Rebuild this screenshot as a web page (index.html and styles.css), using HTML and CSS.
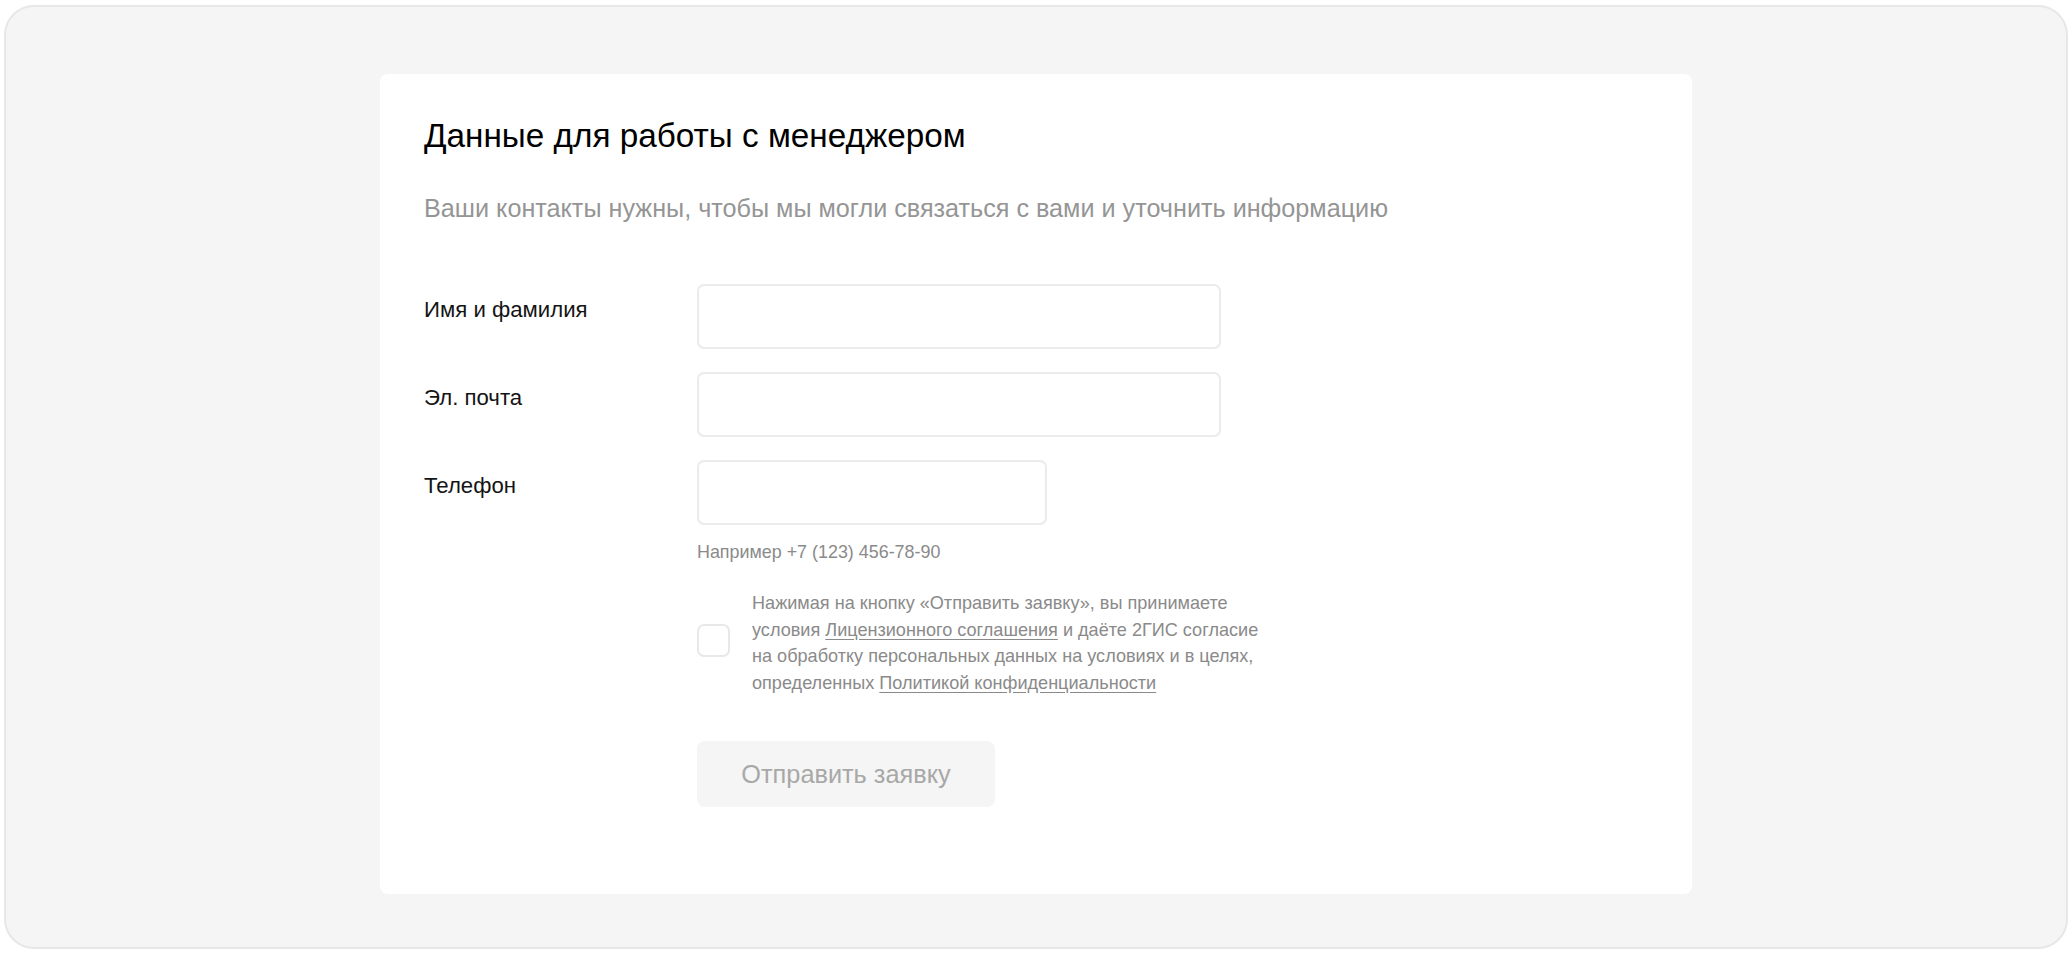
FILE: index.html
```html
<!DOCTYPE html>
<html lang="ru">
<head>
<meta charset="utf-8">
<title>Данные для работы с менеджером</title>
<link rel="stylesheet" href="styles.css">
</head>
<body>
<div class="frame">
  <div class="card">
    <h1 class="title">Данные для работы с менеджером</h1>
    <p class="subtitle">Ваши контакты нужны, чтобы мы могли связаться с вами и уточнить информацию</p>
    <form class="form">
      <div class="row">
        <label class="label" for="name">Имя и фамилия</label>
        <div class="field"><input class="input" id="name" type="text"></div>
      </div>
      <div class="row">
        <label class="label" for="email">Эл. почта</label>
        <div class="field"><input class="input" id="email" type="email"></div>
      </div>
      <div class="row">
        <label class="label" for="phone">Телефон</label>
        <div class="field">
          <input class="input input-short" id="phone" type="tel">
          <div class="hint">Например +7 (123) 456-78-90</div>
        </div>
      </div>
      <div class="row">
        <div></div>
        <div class="field">
          <div class="consent">
            <span class="checkbox"></span>
            <p class="consent-text">Нажимая на кнопку «Отправить заявку», вы принимаете<br>условия <a href="#">Лицензионного соглашения</a> и даёте 2ГИС согласие<br>на обработку персональных данных на условиях и в целях,<br>определенных <a href="#">Политикой конфиденциальности</a></p>
          </div>
          <button class="submit" type="button">Отправить заявку</button>
        </div>
      </div>
    </form>
  </div>
</div>
</body>
</html>
```

FILE: styles.css
```css
* { box-sizing: border-box; }
html, body { margin: 0; padding: 0; }
body {
  background: #ffffff;
  font-family: "Liberation Sans", Arial, Helvetica, sans-serif;
  color: #141414;
}
.frame {
  margin: 5px 4px 7px 4px;
  height: 944px;
  border: 2px solid #e7e7e7;
  border-radius: 30px;
  background: #f5f5f5;
  padding-top: 67px;
  display: flex;
  justify-content: center;
  align-items: flex-start;
}
.card {
  width: 1312px;
  background: #ffffff;
  border-radius: 8px;
  padding: 42px 44px 87px 44px;
}
.title {
  margin: 0;
  font-size: 33.3px;
  line-height: 40px;
  font-weight: 400;
  color: #000;
}
.subtitle {
  margin: 36px 0 0 0;
  font-size: 25.2px;
  line-height: 32px;
  color: #959595;
}
.form {
  margin-top: 60px;
  display: flex;
  flex-direction: column;
  gap: 23px;
}
.row {
  display: grid;
  grid-template-columns: 273px 1fr;
}
.label {
  padding-top: 12px;
  font-size: 22.2px;
  line-height: 28px;
  color: #141414;
}
.field {
  display: flex;
  flex-direction: column;
  align-items: flex-start;
}
.input {
  width: 524px;
  height: 65px;
  border: 2px solid #ebebeb;
  border-radius: 7px;
  background: #fff;
  outline: none;
  padding: 0 16px;
  font: inherit;
}
.input-short { width: 350px; }
.hint {
  margin-top: 14px;
  font-size: 17.9px;
  line-height: 26px;
  color: #8a8a8a;
}
.consent {
  margin-top: 2px;
  display: flex;
  align-items: center;
  gap: 22px;
}
.checkbox {
  flex: none;
  width: 33px;
  height: 33px;
  border: 2px solid #e8e8e8;
  border-radius: 7px;
  background: #fff;
  margin-top: -6px;
}
.consent-text {
  margin: 0;
  font-size: 18.1px;
  line-height: 26.6px;
  color: #8a8a8a;
}
.consent-text a {
  color: #8a8a8a;
  text-decoration: underline;
  text-underline-offset: 3px;
}
.submit {
  margin-top: 45px;
  width: 298px;
  height: 66px;
  border: none;
  border-radius: 8px;
  background: #f5f5f5;
  color: #a8a8a8;
  font-family: inherit;
  font-size: 25.3px;
  padding: 0;
}
```
